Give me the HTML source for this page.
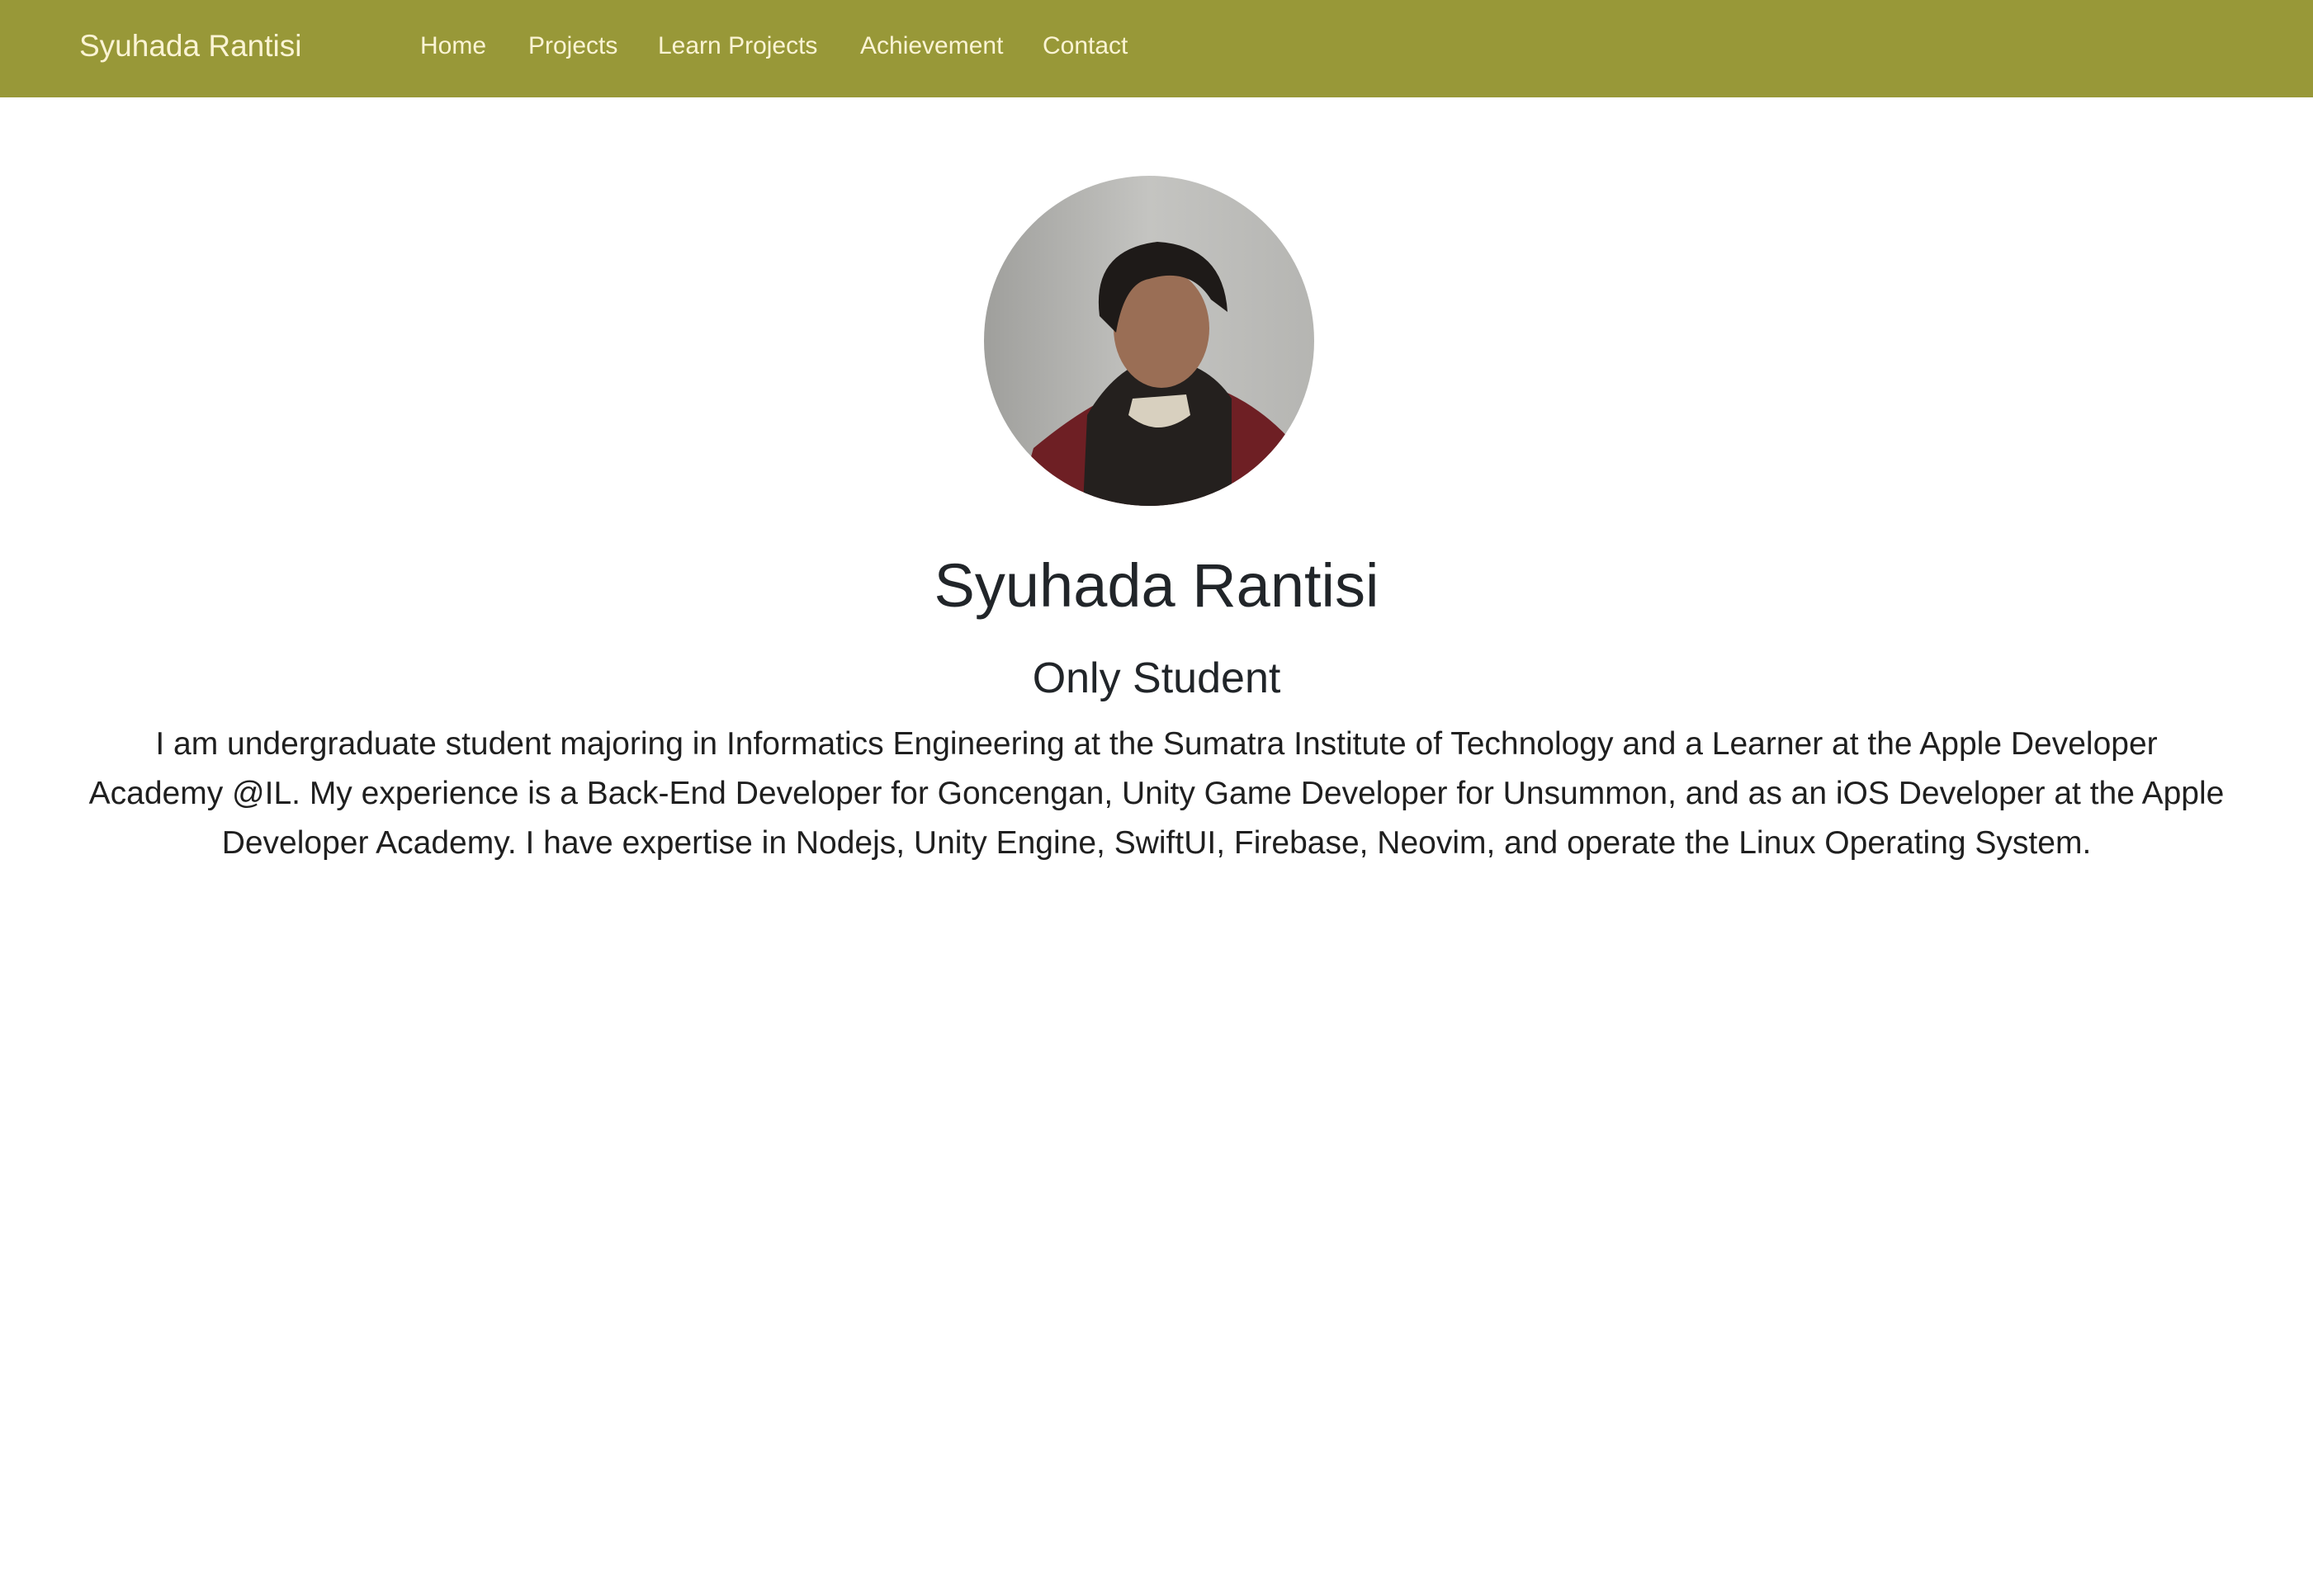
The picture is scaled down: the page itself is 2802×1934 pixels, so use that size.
<!DOCTYPE html>
<html><head><meta charset="utf-8"><style>
*{margin:0;padding:0;box-sizing:border-box}
body{width:2802px;height:1934px;background:#fff;font-family:"Liberation Sans",sans-serif;position:relative;overflow:hidden}
.nav{position:absolute;left:0;top:0;width:2802px;height:118px;background:#989838}
.nav span{position:absolute;top:0;line-height:112px;color:#fbf4d4;white-space:nowrap}
.brand{left:96px;font-size:37px}
.l{font-size:30px}
.c{position:absolute;left:0;width:2802px;text-align:center;color:#212529;white-space:nowrap}
.p{font-size:39px;line-height:60px;color:#1f1f1f}
</style></head><body>
<div class="nav">
<span class="brand">Syuhada Rantisi</span>
<span class="l" style="left:509px">Home</span>
<span class="l" style="left:640px">Projects</span>
<span class="l" style="left:797px">Learn Projects</span>
<span class="l" style="left:1042px">Achievement</span>
<span class="l" style="left:1263px">Contact</span>
</div>
<svg style="position:absolute;left:1192px;top:213px" width="400" height="400" viewBox="0 0 400 400">
<defs><clipPath id="cp"><circle cx="200" cy="200" r="200"/></clipPath>
<linearGradient id="bg" x1="0" x2="1"><stop offset="0" stop-color="#9f9f9c"/><stop offset=".5" stop-color="#c4c4c1"/><stop offset="1" stop-color="#b5b5b2"/></linearGradient></defs>
<g clip-path="url(#cp)">
<rect width="400" height="400" fill="url(#bg)"/>
<path d="M40 400 L60 330 Q120 280 170 260 L260 250 Q330 270 380 330 L380 400Z" fill="#6e1f24"/>
<path d="M120 400 L125 290 Q160 230 210 220 Q270 225 300 270 L300 400Z" fill="#24201e"/>
<path d="M175 290 Q210 320 250 290 L245 265 L180 270Z" fill="#d8d0bf"/>
<ellipse cx="215" cy="185" rx="58" ry="72" fill="#9a6e55"/>
<path d="M140 170 Q130 90 210 80 Q290 85 295 165 L275 150 Q250 110 200 125 Q170 130 160 190Z" fill="#1e1a18"/>
</g></svg>
<div class="c" style="top:662px;font-size:74px;line-height:96px">Syuhada Rantisi</div>
<div class="c" style="top:790px;font-size:52px;line-height:64px">Only Student</div>
<div class="c p" style="top:872px">I am undergraduate student majoring in Informatics Engineering at the Sumatra Institute of Technology and a Learner at the Apple Developer</div>
<div class="c p" style="top:932px">Academy @IL. My experience is a Back-End Developer for Goncengan, Unity Game Developer for Unsummon, and as an iOS Developer at the Apple</div>
<div class="c p" style="top:992px">Developer Academy. I have expertise in Nodejs, Unity Engine, SwiftUI, Firebase, Neovim, and operate the Linux Operating System.</div>
</body></html>
